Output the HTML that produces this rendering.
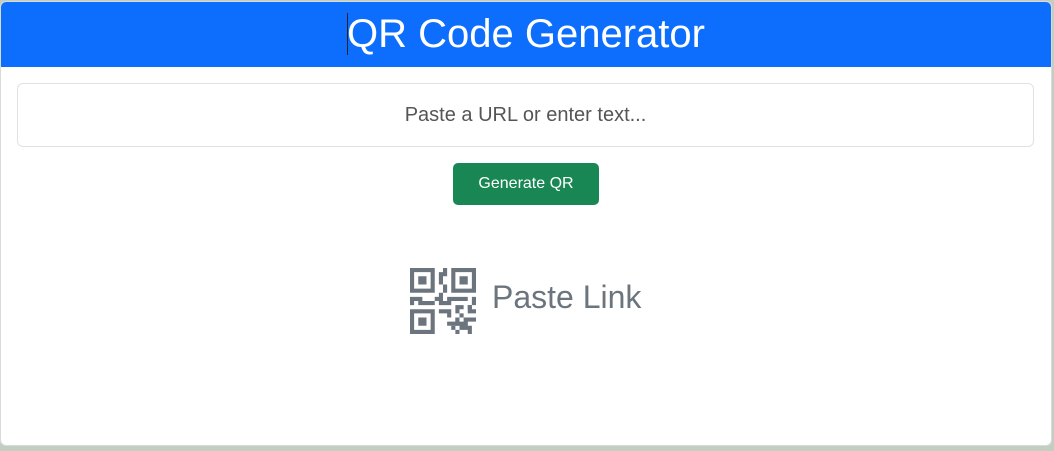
<!DOCTYPE html>
<html><head><meta charset="utf-8"><style>
html,body{margin:0;padding:0;width:1054px;height:451px;overflow:hidden;background:#c3cec3;font-family:"Liberation Sans",sans-serif}
.card{position:absolute;left:0;top:1px;width:1050px;height:443px;background:#fff;border:1px solid #d8dcd8;border-radius:6px;overflow:hidden}
.hdr{position:absolute;left:0;top:0;width:100%;height:65px;background:#0d6efd;color:#fff;font-size:40px;text-align:center;line-height:64px}
.cursor{display:inline-block;width:1px;height:42px;background:#222;vertical-align:-8px;margin-right:-1px}
.inp{position:absolute;left:16px;top:81px;width:1015px;height:62px;border:1px solid #dee2e6;border-radius:6px;text-align:center;line-height:62px;font-size:20px;color:#555}
.btn{position:absolute;left:452px;top:161px;width:146px;height:42px;background:#198754;border-radius:5px;color:#fff;font-size:16px;text-align:center;line-height:42px}
.ph{position:absolute;left:409px;top:266px;height:66px;display:flex;align-items:center;color:#6c757d;font-size:32px}
.ph span{position:relative;top:-4px}
.ph svg{width:66px;height:66px;margin-right:16px}
</style></head><body>
<div class="card">
<div class="hdr"><span class="cursor"></span>QR Code Generator</div>
<div class="inp">Paste a URL or enter text...</div>
<div class="btn">Generate QR</div>
<div class="ph"><svg viewBox="0 0 16 16" fill="#6c757d"><path d="M2 2h2v2H2z"/><path d="M6 0v6H0V0zM5 1H1v4h4zM4 12H2v2h2z"/><path d="M6 10v6H0v-6zm-5 1v4h4v-4zm11-9h2v2h-2z"/><path d="M10 0v6h6V0zm5 1v4h-4V1zM8 1V0h1v2H8v2H7V1zm0 5V4h1v2zM6 8V7h1V6h1v2h1V7h5v1h-4v1H7V8zm0 0v1H2V8H1v1H0V7h3v1zm10 1h-1V7h1zm-1 0h-1v2h2v-1h-1zm-4 0h2v1h-1v1h-1zm2 3v-1h-1v1h-1v1H9v1h3v-2zm0 0h3v1h-2v1h-1zm-4-1v1h1v-2H7v1z"/><path d="M11 16v-1h-1v-1h1v1h1v1h2v-1h-1v-1h-2v-2h1v1h2v1h1v2zm1-2h1v1h-1z"/><path d="M14 9h1v1h-1z"/></svg><span>Paste Link</span></div>
</div>
</body></html>
